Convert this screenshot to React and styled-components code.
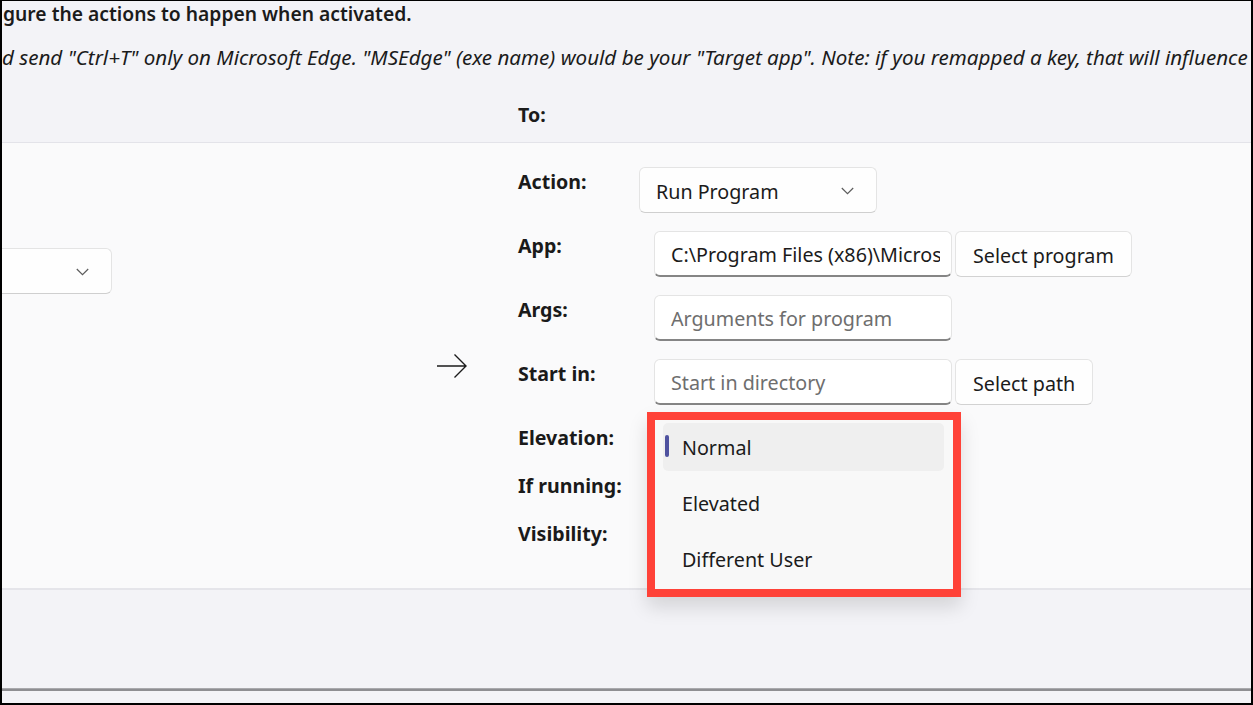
import React from "react";
import styled, { createGlobalStyle } from "styled-components";

const GlobalStyle = createGlobalStyle`
  html, body {
    margin: 0;
    padding: 0;
    background: #000;
  }
  * {
    box-sizing: border-box;
  }
`;

const Frame = styled.div`
  width: 1253px;
  height: 705px;
  border-left: 2px solid #000;
  border-top: 1px solid #000;
  border-right: 2px solid #000;
  border-bottom: 2px solid #000;
  background: #f3f3f7;
  display: flex;
  flex-direction: column;
  overflow: hidden;
  font-family: "Noto Sans", "Open Sans", sans-serif;
  color: #1b1b1b;
`;

const Header = styled.div`
  height: 142px;
  flex-shrink: 0;
  border-bottom: 1px solid #e3e3e9;
  display: flex;
  flex-direction: column;
`;

const Title = styled.div`
  font-size: 19.3px;
  font-weight: 600;
  line-height: 26px;
  padding-left: 1px;
  white-space: nowrap;
`;

const Note = styled.div`
  margin-top: 16px;
  font-size: 20.6px;
  font-style: italic;
  line-height: 28px;
  white-space: nowrap;
  overflow: hidden;
`;

const ToLabel = styled.div`
  margin-top: 32px;
  margin-left: 516px;
  font-size: 19.6px;
  font-weight: 700;
  line-height: 24px;
`;

const Panel = styled.div`
  height: 447px;
  flex-shrink: 0;
  background: #fafafb;
  border-bottom: 2px solid #e5e5ea;
  display: flex;
`;

const LeftCol = styled.div`
  width: 434px;
  flex-shrink: 0;
  padding-top: 105px;
`;

const ArrowCol = styled.div`
  width: 82px;
  flex-shrink: 0;
  display: flex;
  align-items: center;
`;

const Form = styled.div`
  flex: 1;
  padding-top: 24px;
  display: flex;
  flex-direction: column;
`;

const Row = styled.div`
  height: ${(p) => p.$h}px;
  display: grid;
  grid-template-columns: 121px 1fr;
`;

const Label = styled.div`
  padding-top: 3px;
  font-size: 19.6px;
  font-weight: 700;
  line-height: 24px;
  color: #1a1a1a;
`;

const ControlCell = styled.div`
  position: relative;
  display: flex;
  gap: 3px;
  padding-left: ${(p) => p.$indent || 0}px;
  align-items: flex-start;
`;

const Combo = styled.div`
  width: ${(p) => p.$w}px;
  height: 46px;
  margin-left: ${(p) => p.$ml || 0}px;
  background: #fefefe;
  border: 1px solid #e4e4e4;
  border-bottom-color: #cfcfcf;
  border-radius: 6px;
  display: flex;
  align-items: center;
  justify-content: space-between;
  padding: 2px 22px 0 16px;
  font-size: 19.7px;
  color: #1b1b1b;
`;

const TextBox = styled.div`
  width: 298px;
  height: 46px;
  background: #fff;
  border: 1px solid #e4e4e4;
  border-bottom: 2px solid #858585;
  border-radius: 6px;
  display: flex;
  align-items: center;
  padding: 2px 11px 0 16px;
  font-size: 19.7px;
  color: ${(p) => (p.$placeholder ? "#6e6e6e" : "#1b1b1b")};
`;

const TextValue = styled.span`
  flex: 1;
  min-width: 0;
  white-space: nowrap;
  overflow: hidden;
`;

const Button = styled.div`
  height: 46px;
  padding: 2px 17px 0;
  background: #fefefe;
  border: 1px solid #e4e4e4;
  border-bottom-color: #d2d2d2;
  border-radius: 6px;
  display: flex;
  align-items: center;
  font-size: 19.7px;
  white-space: nowrap;
`;

const Popup = styled.div`
  position: absolute;
  left: 8px;
  top: -11px;
  width: 314px;
  height: 185px;
  border: 8px solid #ff4238;
  background: #f8f8f8;
  box-shadow: 0 10px 18px rgba(0, 0, 0, 0.13);
  padding: 3px 9px 0 8px;
  display: flex;
  flex-direction: column;
  gap: 8px;
  z-index: 2;
`;

const Item = styled.div`
  position: relative;
  height: 48px;
  flex-shrink: 0;
  border-radius: 5px;
  background: ${(p) => (p.$active ? "#efefef" : "transparent")};
  display: flex;
  align-items: center;
  padding-left: 19px;
  font-size: 19.7px;
  color: #1b1b1b;
`;

const Accent = styled.span`
  position: absolute;
  left: 2px;
  top: 12px;
  width: 4px;
  height: 22px;
  border-radius: 2px;
  background: #4f529f;
`;

const Footer = styled.div`
  flex: 1;
  display: flex;
  flex-direction: column;
`;

const FooterSpace = styled.div`
  height: 98px;
`;

const Rule = styled.div`
  height: 3px;
  background: #8e8e92;
  border-top: 1px solid #a9a9ad;
`;

const Chevron = () => (
  <svg width="13" height="8" viewBox="0 0 13 8" fill="none">
    <path d="M0.8 1 L6.5 6.6 L12.2 1" stroke="#5c5c5c" strokeWidth="1.2" />
  </svg>
);

const RightArrow = () => (
  <svg width="32" height="26" viewBox="0 0 32 26" fill="none">
    <path d="M1 13 H30 M18.5 1.5 L30 13 L18.5 24.5" stroke="#1b1b1b" strokeWidth="1.4" />
  </svg>
);

const elevationOptions = ["Normal", "Elevated", "Different User"];

export default function App() {
  return (
    <>
      <GlobalStyle />
      <Frame>
        <Header>
          <Title>gure the actions to happen when activated.</Title>
          <Note>
            d send "Ctrl+T" only on Microsoft Edge. "MSEdge" (exe name) would be your "Target app". Note: if you remapped a key, that will influence
          </Note>
          <ToLabel>To:</ToLabel>
        </Header>

        <Panel>
          <LeftCol>
            <Combo $w={132} $ml={-22}>
              <span />
              <Chevron />
            </Combo>
          </LeftCol>
          <ArrowCol>
            <RightArrow />
          </ArrowCol>
          <Form>
            <Row $h={64}>
              <Label>Action:</Label>
              <ControlCell>
                <Combo $w={238}>
                  <span>Run Program</span>
                  <Chevron />
                </Combo>
              </ControlCell>
            </Row>
            <Row $h={64}>
              <Label>App:</Label>
              <ControlCell $indent={15}>
                <TextBox>
                  <TextValue>C:\Program Files (x86)\Micros</TextValue>
                </TextBox>
                <Button>Select program</Button>
              </ControlCell>
            </Row>
            <Row $h={64}>
              <Label>Args:</Label>
              <ControlCell $indent={15}>
                <TextBox $placeholder>
                  <TextValue>Arguments for program</TextValue>
                </TextBox>
              </ControlCell>
            </Row>
            <Row $h={64}>
              <Label>Start in:</Label>
              <ControlCell $indent={15}>
                <TextBox $placeholder>
                  <TextValue>Start in directory</TextValue>
                </TextBox>
                <Button>Select path</Button>
              </ControlCell>
            </Row>
            <Row $h={48}>
              <Label>Elevation:</Label>
              <ControlCell>
                <Popup>
                  {elevationOptions.map((opt, i) => (
                    <Item key={opt} $active={i === 0}>
                      {i === 0 && <Accent />}
                      {opt}
                    </Item>
                  ))}
                </Popup>
              </ControlCell>
            </Row>
            <Row $h={48}>
              <Label>If running:</Label>
              <ControlCell />
            </Row>
            <Row $h={48}>
              <Label>Visibility:</Label>
              <ControlCell />
            </Row>
          </Form>
        </Panel>

        <Footer>
          <FooterSpace />
          <Rule />
        </Footer>
      </Frame>
    </>
  );
}
